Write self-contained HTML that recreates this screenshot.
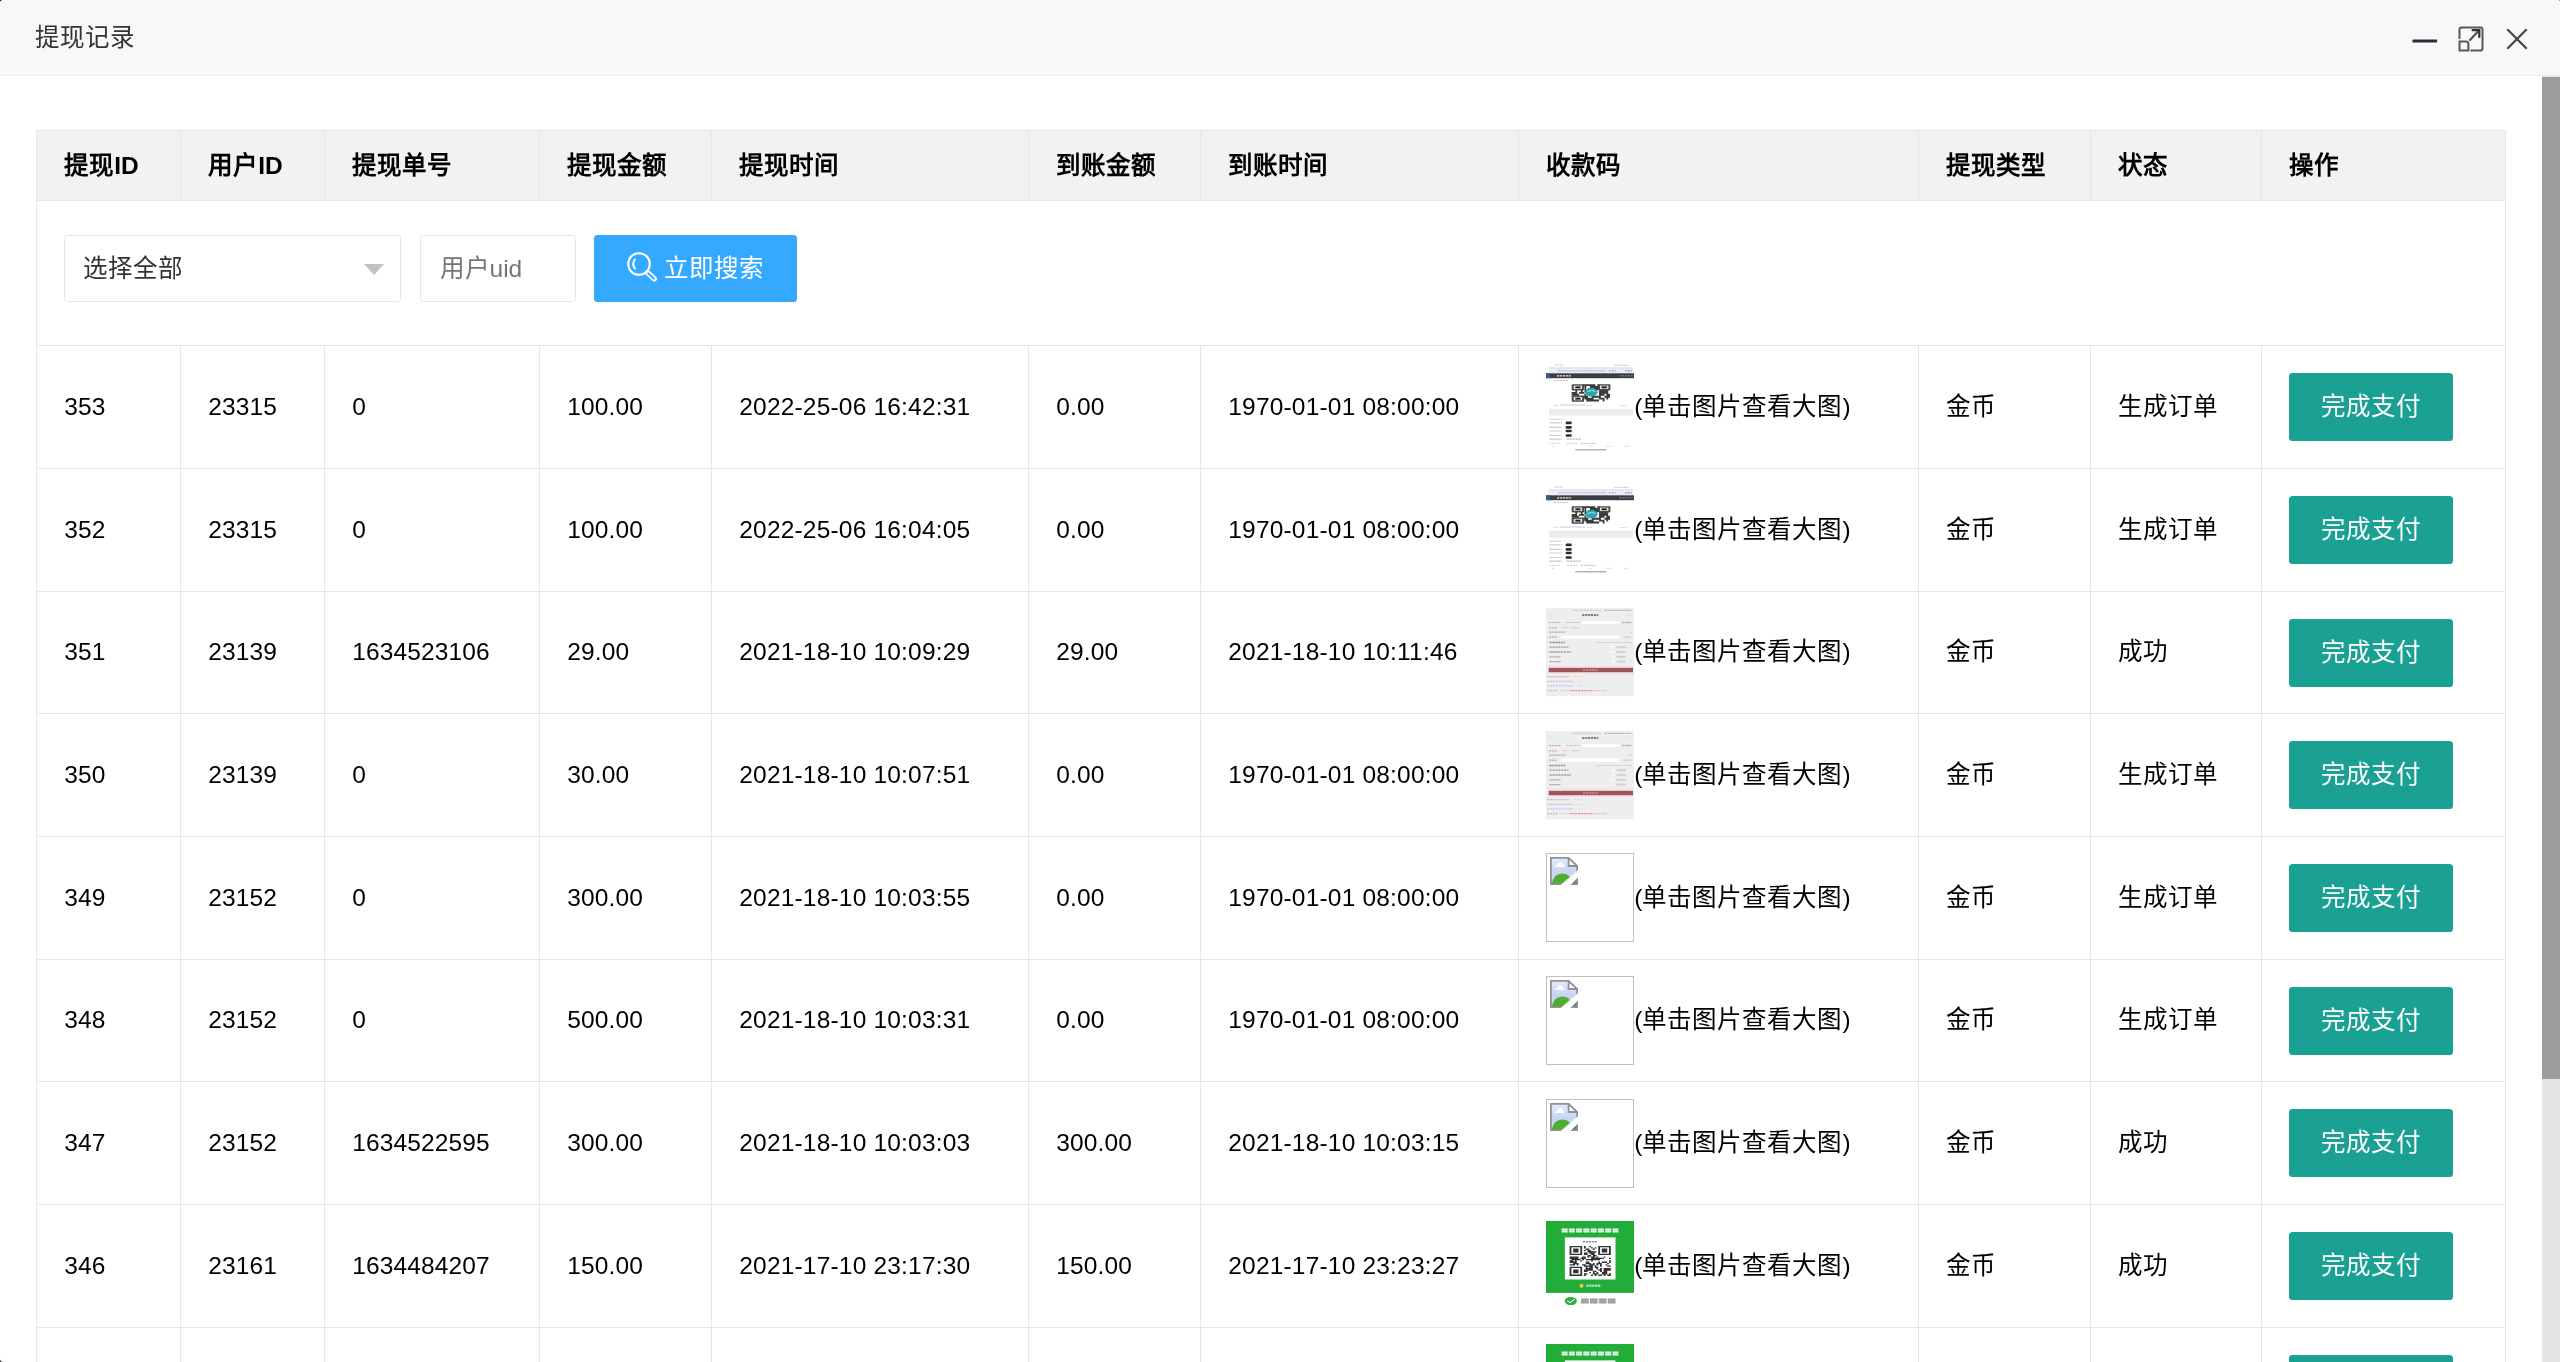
<!DOCTYPE html>
<html lang="zh-CN">
<head>
<meta charset="utf-8">
<title>提现记录</title>
<style>
html,body{margin:0;padding:0}
body{width:2560px;height:1362px;overflow:hidden;background:#2b2b2b;position:relative;font-family:"Liberation Sans",sans-serif;font-size:24.5px;color:#000;line-height:35px}
.bg{position:absolute;left:0;top:0;width:2560px;height:1362px;background:#fff;border-radius:3.5px 2px 0 3.5px}
.page{position:absolute;left:0;top:0;width:2560px;height:1362px;overflow:hidden;will-change:transform;border-radius:3.5px 2px 0 3.5px}
svg{display:block}
.c{letter-spacing:1px}
.nm{letter-spacing:.12px}
.dt{letter-spacing:.19px}
.defs{position:absolute;width:0;height:0;overflow:hidden}
.layer-title{position:absolute;left:0;top:0;width:2560px;height:75px;background:#f8f8f8;border-bottom:1px solid #eee;box-sizing:content-box}
.layer-title .tt{position:absolute;left:35px;top:1px;line-height:73.5px;color:#333;font-size:24.5px;white-space:nowrap}
.ctl svg{position:absolute}
.ic-min{left:2412px;top:39px}
.ic-max{left:2458.3px;top:26.2px}
.ic-close{left:2506.4px;top:28.4px}
.sb-track{position:absolute;left:2542px;top:76px;width:18px;height:1286px;background:#e4e4e4}
.sb-thumb{position:absolute;left:2542px;top:77px;width:18px;height:1002px;background:#9c9c9c}
.tbl{position:absolute;left:36px;top:130px;width:2470px;height:1232px}
.tr{position:absolute;left:0;width:2470px;box-sizing:border-box;border-top:1px solid #e6e6e6}
.tr.thead{background:#f2f2f2}
.tr.search{border-left:1px solid #e6e6e6;border-right:1px solid #e6e6e6}
.tr.search::after{display:none}
.td,.th-c{position:absolute;top:0;bottom:0;box-sizing:border-box;border-left:1px solid #e6e6e6;padding-left:27.25px;display:flex;align-items:center;white-space:nowrap}
.tr::after{content:"";position:absolute;right:0;top:0;bottom:0;width:1px;background:#e6e6e6}
.th-c{font-weight:bold;color:#000}
.th-c>span{position:relative;top:0}
.td{display:block}
.td>span{position:absolute;top:var(--t);line-height:35px}
.sel,.inp{position:absolute;top:34px;height:66.5px;box-sizing:border-box;border:1px solid #e6e6e6;border-radius:3.5px;background:#fff;line-height:66.5px;white-space:nowrap}
.sel{left:27px;width:337px;padding-left:18px;color:#333}
.sel .edge{position:absolute;right:16.5px;top:27.5px;width:0;height:0;border-left:10.5px solid transparent;border-right:10.5px solid transparent;border-top:11px solid #c2c2c2}
.inp{left:383px;width:156px;padding-left:18.5px;color:#757575}
.btn-s{position:absolute;left:557px;top:34px;width:202.6px;height:67px;box-sizing:border-box;background:#35a9ff;border-radius:3.5px;color:#fff;line-height:67px;white-space:nowrap}
.btn-s .ic-search{position:absolute;left:32.4px;top:16.1px}
.btn-s>span{position:absolute;left:70px;top:0}
.td.img{padding-left:27.25px}
.td>.th{position:absolute;left:27.25px;top:var(--i);width:88px;height:88.5px;line-height:0}
.th.broken{box-sizing:border-box;border:1px solid #c0c0c0;background:#fff;display:block}
.th.broken .bi{position:absolute;left:2.5px;top:3px}
.td>span.tip{left:115.25px}
.btn{display:block;width:163.5px;height:67.5px;line-height:67px;text-align:center;background:#1aa194;color:#fff;border-radius:3.5px;position:absolute;top:var(--b);left:27.25px}

</style>
</head>
<body>
<div class="bg"></div>
<div class="page">
<svg class="defs" width="0" height="0" aria-hidden="true"><defs>
<filter id="b1" filterUnits="userSpaceOnUse" x="-6" y="-6" width="100" height="101"><feGaussianBlur stdDeviation="0.6"/></filter>
<filter id="b2" filterUnits="userSpaceOnUse" x="-6" y="-6" width="100" height="101"><feGaussianBlur stdDeviation="0.85"/></filter>
<linearGradient id="sky" x1="0" y1="0" x2="0" y2="1"><stop offset="0" stop-color="#e4ecfb"/><stop offset="0.55" stop-color="#c6d3f3"/><stop offset="1" stop-color="#cfe3f2"/></linearGradient>
<symbol id="icmax" viewBox="0 0 26 26"><path d="M1.5 12.2 V3.6 Q1.5 1.5 3.6 1.5 H22.4 Q24.5 1.5 24.5 3.6 V22.4 Q24.5 24.5 22.4 24.5 H13.2" fill="none" stroke="#55565e" stroke-width="2" stroke-linecap="round"/><path d="M1.5 24.5 V15.6 H8 Q10.4 15.6 10.4 18 V24.5 Z" fill="none" stroke="#55565e" stroke-width="2" stroke-linejoin="round"/><path d="M12 14 L20.2 5.2" fill="none" stroke="#4a4a54" stroke-width="2" stroke-linecap="round"/><path d="M14.6 4.2 H21.3 V11" fill="none" stroke="#2e2d3c" stroke-width="2.2" stroke-linecap="round" stroke-linejoin="miter"/></symbol>
<symbol id="icsearch" viewBox="0 0 32 32"><circle cx="13" cy="13" r="10.8" fill="none" stroke="#fff" stroke-width="2.1"/><path d="M8.9 8.2 Q5.6 13 9 17.6" fill="none" stroke="#fff" stroke-width="2" stroke-linecap="round"/><path d="M21.6 21.6 L28.2 27.9" fill="none" stroke="#fff" stroke-width="5.4" stroke-linecap="round"/><path d="M22.2 22.2 L28 27.7" fill="none" stroke="#35a9ff" stroke-width="1.9" stroke-linecap="round"/></symbol>
<symbol id="brokenimg" viewBox="0 0 28 28"><path d="M0.9 0.9 H18.6 L27.1 9 V27.1 H0.9 Z" fill="url(#sky)"/><path d="M4.4 9.9 Q4.8 8.2 7 8 Q8 5 10.2 5 Q12.6 5 13.2 7.8 Q14.6 8.2 14.4 9.9 Z" fill="#fff" filter="url(#b1)"/><path d="M1.6 27 Q3.6 16.6 12.4 16.6 Q18.6 16.8 20.6 21.5 L26.4 22.2 V27 Z" fill="#50ad33"/><path d="M18.7 27.1 L27.1 19.4 V27.1 Z" fill="#5d8a58"/><path d="M18.6 0.9 V9 H27.1 Z" fill="#fff"/><path d="M0.9 27.1 V0.9 H18.6 L27.1 9 V27.1 Z M18.6 0.9 V9 H27.1" fill="none" stroke="#8e9196" stroke-width="1.8" stroke-linejoin="miter"/><path d="M10.6 29 L19.4 29 L29 19.6 L29 12.8 Z" fill="#fff"/><path d="M11.4 28 L28 13.6" stroke="#e9fbe0" stroke-width="1.2" fill="none"/></symbol>
<symbol id="thumbA" viewBox="0 0 88 88.5"><rect x="0.00" y="0.00" width="88.00" height="88.00" fill="#fff"/><g filter="url(#b1)"><path d="M8.00 2.00H17.50" stroke="#c9c9c9" stroke-width="1.10" stroke-dasharray="2.2 0.7" fill="none"/><path d="M68.50 2.40H83.00" stroke="#cfcfcf" stroke-width="1.10" stroke-dasharray="2.2 0.7" fill="none"/><rect x="3.00" y="4.60" width="84.00" height="0.90" fill="#c8c8c8"/><rect x="2.50" y="5.80" width="85.00" height="4.20" fill="#eaeff6"/><path d="M12.00 7.90H60.00" stroke="#b9bfca" stroke-width="1.10" stroke-dasharray="2.2 0.7" fill="none"/><path d="M63.00 7.90H70.00" stroke="#b0b4bb" stroke-width="1.20" stroke-dasharray="2.2 0.7" fill="none"/><path d="M79.00 7.90H86.00" stroke="#9aa0a8" stroke-width="1.40" stroke-dasharray="2.2 0.7" fill="none"/><rect x="0.00" y="10.30" width="88.00" height="4.90" fill="#3a3e45"/><rect x="0.00" y="10.30" width="4.20" height="4.90" fill="#3d5c78"/><path d="M11.00 12.80H25.00" stroke="#e8e8e8" stroke-width="1.20" stroke-dasharray="2.2 0.7" fill="none"/><path d="M73.00 12.80H87.00" stroke="#7d8188" stroke-width="1.00" stroke-dasharray="2.2 0.7" fill="none"/><path d="M8.00 17.60H22.50" stroke="#d9b9bd" stroke-width="1.00" stroke-dasharray="2.2 0.7" fill="none"/><rect x="3.60" y="16.20" width="0.80" height="2.40" fill="#c7d3e6"/></g><g filter="url(#b1)"><path d="M36.64 21.20h12.77v1.92h-12.77zM51.23 21.20h1.82v1.92h-1.82zM38.47 23.12h1.82v1.92h-1.82zM43.94 23.12h9.12v1.92h-9.12zM38.47 25.04h1.82v1.92h-1.82zM42.11 25.04h3.65v1.92h-3.65zM47.59 25.04h5.47v1.92h-5.47zM29.35 26.97h1.82v1.92h-1.82zM34.82 26.97h1.82v1.92h-1.82zM38.47 26.97h1.82v1.92h-1.82zM47.59 26.97h3.65v1.92h-3.65zM53.06 26.97h9.12v1.92h-9.12zM25.70 28.89h5.47v1.92h-5.47zM33.00 28.89h5.47v1.92h-5.47zM43.94 28.89h5.47v1.92h-5.47zM53.06 28.89h9.12v1.92h-9.12zM25.70 30.81h7.30v1.92h-7.30zM38.47 30.81h1.82v1.92h-1.82zM43.94 30.81h1.82v1.92h-1.82zM53.06 30.81h5.47v1.92h-5.47zM60.35 30.81h3.65v1.92h-3.65zM36.64 32.73h5.47v1.92h-5.47zM45.76 32.73h9.12v1.92h-9.12zM58.53 32.73h5.47v1.92h-5.47zM38.47 34.66h9.12v1.92h-9.12zM53.06 34.66h5.47v1.92h-5.47zM60.35 34.66h1.82v1.92h-1.82zM40.29 36.58h12.77v1.92h-12.77zM56.70 36.58h1.82v1.92h-1.82z" fill="#3a3a3a"/><rect x="25.70" y="21.20" width="12.40" height="6.20" fill="#4a4a4a"  rx="0.8"/><rect x="27.70" y="22.60" width="8.40" height="3.40" fill="#e9e9e9"/><rect x="29.30" y="23.40" width="5.20" height="1.90" fill="#1c1c1c"/><rect x="52.00" y="21.20" width="12.40" height="6.20" fill="#4a4a4a"  rx="0.8"/><rect x="54.00" y="22.60" width="8.40" height="3.40" fill="#e9e9e9"/><rect x="55.60" y="23.40" width="5.20" height="1.90" fill="#1c1c1c"/><rect x="25.70" y="32.50" width="12.40" height="6.20" fill="#4a4a4a"  rx="0.8"/><rect x="27.70" y="33.90" width="8.40" height="3.40" fill="#e9e9e9"/><rect x="29.30" y="34.70" width="5.20" height="1.90" fill="#1c1c1c"/><ellipse cx="45.4" cy="29.3" rx="6.2" ry="4.2" fill="#2ba6b2"/><path d="M41.5 28.6 Q45.5 26.2 49.5 28.4" stroke="#bfe9ee" stroke-width="0.9" fill="none"/></g><g filter="url(#b1)"><path d="M8.00 42.30H12.80" stroke="#d5d5d5" stroke-width="1.00" stroke-dasharray="2.2 0.7" fill="none"/><rect x="14.00" y="41.60" width="25.00" height="0.90" fill="#b9c6ea"/><path d="M41.00 42.60H46.00" stroke="#cfcfcf" stroke-width="1.00" stroke-dasharray="2.2 0.7" fill="none"/><path d="M73.50 42.60H80.50" stroke="#d5d5d5" stroke-width="1.00" stroke-dasharray="2.2 0.7" fill="none"/><rect x="3.00" y="45.80" width="83.80" height="6.90" fill="#ececec"/><path d="M3.50 56.30H16.00" stroke="#c3c3c3" stroke-width="1.10" stroke-dasharray="2.2 0.7" fill="none"/><path d="M3.50 59.90H16.00" stroke="#c3c3c3" stroke-width="1.10" stroke-dasharray="2.2 0.7" fill="none"/><rect x="19.60" y="58.60" width="6.20" height="2.60" fill="#2f2f2f"  rx="1.2"/><path d="M3.50 64.40H16.00" stroke="#c3c3c3" stroke-width="1.10" stroke-dasharray="2.2 0.7" fill="none"/><rect x="19.60" y="63.10" width="6.20" height="2.60" fill="#2f2f2f"  rx="1.2"/><path d="M3.50 68.00H16.00" stroke="#c3c3c3" stroke-width="1.10" stroke-dasharray="2.2 0.7" fill="none"/><rect x="19.60" y="66.70" width="6.20" height="2.60" fill="#2f2f2f"  rx="1.2"/><path d="M3.50 72.50H16.00" stroke="#c3c3c3" stroke-width="1.10" stroke-dasharray="2.2 0.7" fill="none"/><rect x="19.60" y="71.20" width="6.20" height="2.60" fill="#2f2f2f"  rx="1.2"/><rect x="17.80" y="55.60" width="1.20" height="1.20" fill="#f0d9c8"/><rect x="24.60" y="55.60" width="1.20" height="1.20" fill="#f0d9c8"/><path d="M3.50 76.10H16.00" stroke="#bdbdbd" stroke-width="1.10" stroke-dasharray="2.2 0.7" fill="none"/><path d="M20.80 76.10H34.60" stroke="#a9bed3" stroke-width="1.10" stroke-dasharray="2.2 0.7" fill="none"/><path d="M3.00 80.40H14.40" stroke="#d9d9d9" stroke-width="1.00" stroke-dasharray="2.2 0.7" fill="none"/><path d="M20.80 80.40H31.30" stroke="#c6d3ea" stroke-width="1.00" stroke-dasharray="2.2 0.7" fill="none"/><path d="M34.50 80.40H50.00" stroke="#a9cfd0" stroke-width="1.00" stroke-dasharray="2.2 0.7" fill="none"/><path d="M6.00 83.30H9.00" stroke="#dcdcdc" stroke-width="1.00" stroke-dasharray="2.2 0.7" fill="none"/><path d="M43.50 83.30H46.70" stroke="#d2d2d2" stroke-width="1.00" stroke-dasharray="2.2 0.7" fill="none"/><path d="M59.60 83.30H66.00" stroke="#d8d8d8" stroke-width="1.00" stroke-dasharray="2.2 0.7" fill="none"/><path d="M78.20 83.30H83.80" stroke="#d8d8d8" stroke-width="1.00" stroke-dasharray="2.2 0.7" fill="none"/><rect x="29.00" y="85.90" width="31.40" height="1.50" fill="#b3b3b3"  rx="0.7"/></g></symbol>
<symbol id="thumbB" viewBox="0 0 88 88.5"><rect x="0.00" y="0.00" width="88.00" height="88.50" fill="#eeeeee"/><g filter="url(#b1)"><path d="M26.50 2.40H54.80" stroke="#cdcdcd" stroke-width="1.10" stroke-dasharray="2.2 0.7" fill="none"/><path d="M58.80 2.40H85.50" stroke="#b7b7b7" stroke-width="1.20" stroke-dasharray="2.2 0.7" fill="none"/><path d="M36.20 6.90H52.30" stroke="#5c5c5c" stroke-width="1.50" stroke-dasharray="2.2 0.7" fill="none"/><path d="M2.30 6.90H6.30" stroke="#d6d6d6" stroke-width="1.00" stroke-dasharray="2.2 0.7" fill="none"/><path d="M80.60 6.90H85.50" stroke="#dadada" stroke-width="1.00" stroke-dasharray="2.2 0.7" fill="none"/><rect x="35.40" y="13.20" width="37.90" height="2.70" fill="#ffffff"/><path d="M3.00 14.50H15.20" stroke="#b4b4b4" stroke-width="1.20" stroke-dasharray="2.2 0.7" fill="none"/><path d="M20.00 14.50H34.60" stroke="#c4c4c4" stroke-width="1.10" stroke-dasharray="2.2 0.7" fill="none"/><path d="M76.20 14.50H85.50" stroke="#9fc29a" stroke-width="1.30" stroke-dasharray="2.2 0.7" fill="none"/><path d="M3.00 19.80H11.10" stroke="#e9a3ae" stroke-width="1.20" stroke-dasharray="2.2 0.7" fill="none"/><path d="M16.00 19.80H22.50" stroke="#efb9c1" stroke-width="1.10" stroke-dasharray="2.2 0.7" fill="none"/><path d="M25.70 19.80H33.00" stroke="#c2c2c2" stroke-width="1.10" stroke-dasharray="2.2 0.7" fill="none"/><path d="M3.50 24.20H19.20" stroke="#a9a9a9" stroke-width="1.30" stroke-dasharray="2.2 0.7" fill="none"/><path d="M83.40 24.20H85.90" stroke="#c2c2c2" stroke-width="1.10" stroke-dasharray="2.2 0.7" fill="none"/><rect x="15.20" y="27.40" width="58.10" height="3.30" fill="#ffffff"/><path d="M3.00 29.10H11.00" stroke="#b4b4b4" stroke-width="1.20" stroke-dasharray="2.2 0.7" fill="none"/><path d="M77.40 29.10H84.70" stroke="#c3c3c3" stroke-width="1.10" stroke-dasharray="2.2 0.7" fill="none"/><path d="M3.50 34.50H19.20" stroke="#8f8f8f" stroke-width="1.40" stroke-dasharray="2.2 0.7" fill="none"/><path d="M49.00 34.50H86.30" stroke="#cfcfcf" stroke-width="1.00" stroke-dasharray="2.2 0.7" fill="none"/><path d="M3.50 39.20H22.50" stroke="#9d9d9d" stroke-width="1.30" stroke-dasharray="2.2 0.7" fill="none"/><rect x="70.50" y="38.20" width="9.30" height="2.00" fill="#d2d2d2"/><rect x="65.30" y="38.20" width="3.20" height="2.00" fill="#fafafa"/><path d="M3.50 44.00H25.00" stroke="#9d9d9d" stroke-width="1.30" stroke-dasharray="2.2 0.7" fill="none"/><rect x="70.50" y="43.00" width="9.30" height="2.00" fill="#d2d2d2"/><rect x="65.30" y="43.00" width="3.20" height="2.00" fill="#fafafa"/><path d="M3.50 48.90H15.20" stroke="#b0a3a3" stroke-width="1.30" stroke-dasharray="2.2 0.7" fill="none"/><rect x="70.50" y="47.90" width="9.30" height="2.00" fill="#d2d2d2"/><rect x="65.30" y="47.90" width="3.20" height="2.00" fill="#fafafa"/><path d="M3.50 53.60H14.40" stroke="#b0a3a3" stroke-width="1.30" stroke-dasharray="2.2 0.7" fill="none"/><rect x="70.50" y="52.60" width="9.30" height="2.00" fill="#d2d2d2"/><rect x="65.30" y="52.60" width="3.20" height="2.00" fill="#fafafa"/><rect x="0.00" y="57.80" width="88.00" height="0.90" fill="#f6dcdc"/><rect x="2.70" y="59.80" width="84.30" height="4.50" fill="#a3525a"/><path d="M37.00 62.00H52.30" stroke="#d9b3b7" stroke-width="1.10" stroke-dasharray="2.2 0.7" fill="none"/><rect x="0.00" y="64.80" width="88.00" height="0.80" fill="#f4dede"/><path d="M1.00 68.70H22.50" stroke="#eab1ba" stroke-width="1.20" stroke-dasharray="2.2 0.7" fill="none"/><path d="M28.00 68.70H37.00" stroke="#f1cdd2" stroke-width="1.00" stroke-dasharray="2.2 0.7" fill="none"/><path d="M1.00 73.30H27.30" stroke="#c1c6f0" stroke-width="1.30" stroke-dasharray="2.2 0.7" fill="none"/><path d="M32.00 73.30H38.60" stroke="#d6d9f3" stroke-width="1.00" stroke-dasharray="2.2 0.7" fill="none"/><path d="M1.00 77.80H27.30" stroke="#c4c9f0" stroke-width="1.30" stroke-dasharray="2.2 0.7" fill="none"/><path d="M32.00 77.80H37.00" stroke="#dcdcf2" stroke-width="1.00" stroke-dasharray="2.2 0.7" fill="none"/><path d="M1.00 82.60H12.00" stroke="#ebb4bc" stroke-width="1.20" stroke-dasharray="2.2 0.7" fill="none"/><path d="M14.00 82.60H22.00" stroke="#d3d3d3" stroke-width="1.00" stroke-dasharray="2.2 0.7" fill="none"/><path d="M23.30 82.60H45.90" stroke="#ea8fa0" stroke-width="1.30" stroke-dasharray="2.2 0.7" fill="none"/><path d="M46.70 82.60H61.20" stroke="#c9c9c9" stroke-width="1.10" stroke-dasharray="2.2 0.7" fill="none"/></g></symbol>
<symbol id="thumbC" viewBox="0 0 88 88.5"><rect x="0.00" y="0.00" width="88.00" height="71.90" fill="#22ac38"/><g filter="url(#b1)"><path d="M15.6 9.5H73" stroke="#e9f7ec" stroke-width="4" stroke-dasharray="6.1 1.15" fill="none"/><path d="M15.6 9.5H73" stroke="#22ac38" stroke-width="1" stroke-dasharray="1.2 1.3" fill="none" opacity="0.55"/></g><rect x="18.90" y="16.40" width="50.60" height="42.10" fill="#ffffff"/><g filter="url(#b1)"><path d="M36.90 20.80H51.00" stroke="#8d8d8d" stroke-width="1.40" stroke-dasharray="2.2 0.7" fill="none"/><path d="M23.60 25.00h12.54v1.30h-12.54zM37.93 25.00h1.79v1.30h-1.79zM43.30 25.00h1.79v1.30h-1.79zM52.26 25.00h12.54v1.30h-12.54zM23.60 26.30h1.79v1.30h-1.79zM34.35 26.30h1.79v1.30h-1.79zM37.93 26.30h1.79v1.30h-1.79zM45.10 26.30h1.79v1.30h-1.79zM48.68 26.30h1.79v1.30h-1.79zM52.26 26.30h1.79v1.30h-1.79zM63.01 26.30h1.79v1.30h-1.79zM23.60 27.60h1.79v1.30h-1.79zM27.18 27.60h5.37v1.30h-5.37zM34.35 27.60h1.79v1.30h-1.79zM39.72 27.60h3.58v1.30h-3.58zM46.89 27.60h1.79v1.30h-1.79zM52.26 27.60h1.79v1.30h-1.79zM55.84 27.60h5.37v1.30h-5.37zM63.01 27.60h1.79v1.30h-1.79zM23.60 28.90h1.79v1.30h-1.79zM27.18 28.90h5.37v1.30h-5.37zM34.35 28.90h1.79v1.30h-1.79zM37.93 28.90h1.79v1.30h-1.79zM41.51 28.90h3.58v1.30h-3.58zM52.26 28.90h1.79v1.30h-1.79zM55.84 28.90h5.37v1.30h-5.37zM63.01 28.90h1.79v1.30h-1.79zM23.60 30.20h1.79v1.30h-1.79zM27.18 30.20h5.37v1.30h-5.37zM34.35 30.20h1.79v1.30h-1.79zM41.51 30.20h8.96v1.30h-8.96zM52.26 30.20h1.79v1.30h-1.79zM55.84 30.20h5.37v1.30h-5.37zM63.01 30.20h1.79v1.30h-1.79zM23.60 31.50h1.79v1.30h-1.79zM34.35 31.50h1.79v1.30h-1.79zM37.93 31.50h3.58v1.30h-3.58zM43.30 31.50h5.37v1.30h-5.37zM52.26 31.50h1.79v1.30h-1.79zM63.01 31.50h1.79v1.30h-1.79zM23.60 32.80h12.54v1.30h-12.54zM37.93 32.80h3.58v1.30h-3.58zM45.10 32.80h3.58v1.30h-3.58zM52.26 32.80h12.54v1.30h-12.54zM41.51 34.10h3.58v1.30h-3.58zM46.89 34.10h3.58v1.30h-3.58zM23.60 35.40h8.96v1.30h-8.96zM36.14 35.40h3.58v1.30h-3.58zM41.51 35.40h1.79v1.30h-1.79zM45.10 35.40h3.58v1.30h-3.58zM50.47 35.40h1.79v1.30h-1.79zM57.63 35.40h1.79v1.30h-1.79zM23.60 36.70h8.96v1.30h-8.96zM34.35 36.70h5.37v1.30h-5.37zM45.10 36.70h12.54v1.30h-12.54zM63.01 36.70h1.79v1.30h-1.79zM25.39 38.00h8.96v1.30h-8.96zM36.14 38.00h1.79v1.30h-1.79zM39.72 38.00h14.33v1.30h-14.33zM23.60 39.30h3.58v1.30h-3.58zM28.97 39.30h1.79v1.30h-1.79zM34.35 39.30h1.79v1.30h-1.79zM45.10 39.30h1.79v1.30h-1.79zM63.01 39.30h1.79v1.30h-1.79zM23.60 40.60h7.17v1.30h-7.17zM39.72 40.60h3.58v1.30h-3.58zM52.26 40.60h1.79v1.30h-1.79zM55.84 40.60h5.37v1.30h-5.37zM63.01 40.60h1.79v1.30h-1.79zM27.18 41.90h5.37v1.30h-5.37zM39.72 41.90h5.37v1.30h-5.37zM46.89 41.90h1.79v1.30h-1.79zM50.47 41.90h5.37v1.30h-5.37zM61.22 41.90h1.79v1.30h-1.79zM23.60 43.20h5.37v1.30h-5.37zM30.77 43.20h1.79v1.30h-1.79zM36.14 43.20h3.58v1.30h-3.58zM43.30 43.20h5.37v1.30h-5.37zM50.47 43.20h1.79v1.30h-1.79zM54.05 43.20h1.79v1.30h-1.79zM59.43 43.20h1.79v1.30h-1.79zM37.93 44.50h8.96v1.30h-8.96zM48.68 44.50h1.79v1.30h-1.79zM54.05 44.50h1.79v1.30h-1.79zM61.22 44.50h3.58v1.30h-3.58zM23.60 45.80h12.54v1.30h-12.54zM39.72 45.80h1.79v1.30h-1.79zM43.30 45.80h3.58v1.30h-3.58zM48.68 45.80h3.58v1.30h-3.58zM23.60 47.10h1.79v1.30h-1.79zM34.35 47.10h1.79v1.30h-1.79zM39.72 47.10h7.17v1.30h-7.17zM50.47 47.10h1.79v1.30h-1.79zM54.05 47.10h1.79v1.30h-1.79zM57.63 47.10h7.17v1.30h-7.17zM23.60 48.40h1.79v1.30h-1.79zM27.18 48.40h5.37v1.30h-5.37zM34.35 48.40h1.79v1.30h-1.79zM37.93 48.40h8.96v1.30h-8.96zM52.26 48.40h3.58v1.30h-3.58zM57.63 48.40h7.17v1.30h-7.17zM23.60 49.70h1.79v1.30h-1.79zM27.18 49.70h5.37v1.30h-5.37zM34.35 49.70h1.79v1.30h-1.79zM37.93 49.70h3.58v1.30h-3.58zM46.89 49.70h3.58v1.30h-3.58zM54.05 49.70h1.79v1.30h-1.79zM57.63 49.70h3.58v1.30h-3.58zM23.60 51.00h1.79v1.30h-1.79zM27.18 51.00h5.37v1.30h-5.37zM34.35 51.00h1.79v1.30h-1.79zM43.30 51.00h1.79v1.30h-1.79zM46.89 51.00h1.79v1.30h-1.79zM50.47 51.00h1.79v1.30h-1.79zM55.84 51.00h5.37v1.30h-5.37zM23.60 52.30h1.79v1.30h-1.79zM34.35 52.30h1.79v1.30h-1.79zM37.93 52.30h3.58v1.30h-3.58zM46.89 52.30h5.37v1.30h-5.37zM55.84 52.30h5.37v1.30h-5.37zM63.01 52.30h1.79v1.30h-1.79zM23.60 53.60h12.54v1.30h-12.54zM37.93 53.60h1.79v1.30h-1.79zM45.10 53.60h1.79v1.30h-1.79zM48.68 53.60h1.79v1.30h-1.79zM52.26 53.60h3.58v1.30h-3.58zM57.63 53.60h1.79v1.30h-1.79zM61.22 53.60h3.58v1.30h-3.58z" fill="#303030"/></g><g filter="url(#b1)"><circle cx="35.5" cy="64.8" r="2.1" fill="#e7c63e"/><path d="M40.50 64.80H55.10" stroke="#a9e2b2" stroke-width="2.40" stroke-dasharray="2.2 0.7" fill="none"/><ellipse cx="24.8" cy="80.1" rx="6.1" ry="4" fill="#2aae3d"/><path d="M21.4 79.8 L24 81.6 L28.4 78.4" stroke="#fff" stroke-width="1.1" fill="none"/><path d="M35 80H69.6" stroke="#9a9a9a" stroke-width="5" stroke-dasharray="7.8 1.1" fill="none"/><path d="M35 80H69.6" stroke="#fff" stroke-width="1.1" stroke-dasharray="1.1 1.5" fill="none" opacity="0.6"/></g></symbol>
</defs></svg>
<div class="layer-title"><span class="tt"><span class="c">提现记录</span></span><div class="ctl"><svg class="ic-min" width="26" height="4" viewBox="0 0 26 4"><rect x="0.5" y="0.4" width="24.6" height="3.2" rx="0.5" fill="#2e2d3c"/></svg><svg class="ic-max" width="26" height="26" viewBox="0 0 26 26"><use href="#icmax"/></svg><svg class="ic-close" width="22" height="22" viewBox="0 0 22 22"><path d="M1.3 1.3 L20.7 20.7 M20.7 1.3 L1.3 20.7" stroke="#45454e" stroke-width="2.2" fill="none"/></svg></div></div>
<div class="sb-track"></div><div class="sb-thumb"></div>
<div class="tbl">
<div class="tr thead" style="top:0px;height:70px"><div class="th-c" style="left:0px;width:144px"><span><span class="c">提现</span>ID</span></div><div class="th-c" style="left:144px;width:144px"><span><span class="c">用户</span>ID</span></div><div class="th-c" style="left:288px;width:215px"><span><span class="c">提现单号</span></span></div><div class="th-c" style="left:503px;width:172px"><span><span class="c">提现金额</span></span></div><div class="th-c" style="left:675px;width:317px"><span><span class="c">提现时间</span></span></div><div class="th-c" style="left:992px;width:172px"><span><span class="c">到账金额</span></span></div><div class="th-c" style="left:1164px;width:318px"><span><span class="c">到账时间</span></span></div><div class="th-c" style="left:1482px;width:400px"><span><span class="c">收款码</span></span></div><div class="th-c" style="left:1882px;width:172px"><span><span class="c">提现类型</span></span></div><div class="th-c" style="left:2054px;width:171px"><span><span class="c">状态</span></span></div><div class="th-c" style="left:2225px;width:244px"><span><span class="c">操作</span></span></div></div>
<div class="tr search" style="top:70px;height:145px"><div class="sel"><span><span class="c">选择全部</span></span><i class="edge"></i></div><div class="inp"><span><span class="c">用户</span>uid</span></div><div class="btn-s"><svg class="ic-search" width="32" height="32" viewBox="0 0 32 32"><use href="#icsearch"/></svg><span><span class="c">立即搜索</span></span></div></div>
<div class="tr" style="top:215px;height:123px;--t:43px;--i:17px;--b:27px"><div class="td nm" style="left:0px;width:144px"><span>353</span></div><div class="td nm" style="left:144px;width:144px"><span>23315</span></div><div class="td nm" style="left:288px;width:215px"><span>0</span></div><div class="td nm" style="left:503px;width:172px"><span>100.00</span></div><div class="td dt" style="left:675px;width:317px"><span>2022-25-06 16:42:31</span></div><div class="td nm" style="left:992px;width:172px"><span>0.00</span></div><div class="td dt" style="left:1164px;width:318px"><span>1970-01-01 08:00:00</span></div><div class="td img" style="left:1482px;width:400px"><svg class="th" width="88" height="88.5" viewBox="0 0 88 88.5" preserveAspectRatio="none"><use href="#thumbA"/></svg><span class="tip">(<span class="c">单击图片查看大图</span>)</span></div><div class="td" style="left:1882px;width:172px"><span><span class="c">金币</span></span></div><div class="td" style="left:2054px;width:171px"><span><span class="c">生成订单</span></span></div><div class="td op" style="left:2225px;width:244px"><a class="btn"><span class="c">完成支付</span></a></div></div>
<div class="tr" style="top:338px;height:123px;--t:43px;--i:16px;--b:27px"><div class="td nm" style="left:0px;width:144px"><span>352</span></div><div class="td nm" style="left:144px;width:144px"><span>23315</span></div><div class="td nm" style="left:288px;width:215px"><span>0</span></div><div class="td nm" style="left:503px;width:172px"><span>100.00</span></div><div class="td dt" style="left:675px;width:317px"><span>2022-25-06 16:04:05</span></div><div class="td nm" style="left:992px;width:172px"><span>0.00</span></div><div class="td dt" style="left:1164px;width:318px"><span>1970-01-01 08:00:00</span></div><div class="td img" style="left:1482px;width:400px"><svg class="th" width="88" height="88.5" viewBox="0 0 88 88.5" preserveAspectRatio="none"><use href="#thumbA"/></svg><span class="tip">(<span class="c">单击图片查看大图</span>)</span></div><div class="td" style="left:1882px;width:172px"><span><span class="c">金币</span></span></div><div class="td" style="left:2054px;width:171px"><span><span class="c">生成订单</span></span></div><div class="td op" style="left:2225px;width:244px"><a class="btn"><span class="c">完成支付</span></a></div></div>
<div class="tr" style="top:461px;height:122px;--t:42px;--i:16px;--b:27px"><div class="td nm" style="left:0px;width:144px"><span>351</span></div><div class="td nm" style="left:144px;width:144px"><span>23139</span></div><div class="td nm" style="left:288px;width:215px"><span>1634523106</span></div><div class="td nm" style="left:503px;width:172px"><span>29.00</span></div><div class="td dt" style="left:675px;width:317px"><span>2021-18-10 10:09:29</span></div><div class="td nm" style="left:992px;width:172px"><span>29.00</span></div><div class="td dt" style="left:1164px;width:318px"><span>2021-18-10 10:11:46</span></div><div class="td img" style="left:1482px;width:400px"><svg class="th" width="88" height="88.5" viewBox="0 0 88 88.5" preserveAspectRatio="none"><use href="#thumbB"/></svg><span class="tip">(<span class="c">单击图片查看大图</span>)</span></div><div class="td" style="left:1882px;width:172px"><span><span class="c">金币</span></span></div><div class="td" style="left:2054px;width:171px"><span><span class="c">成功</span></span></div><div class="td op" style="left:2225px;width:244px"><a class="btn"><span class="c">完成支付</span></a></div></div>
<div class="tr" style="top:583px;height:123px;--t:43px;--i:17px;--b:27px"><div class="td nm" style="left:0px;width:144px"><span>350</span></div><div class="td nm" style="left:144px;width:144px"><span>23139</span></div><div class="td nm" style="left:288px;width:215px"><span>0</span></div><div class="td nm" style="left:503px;width:172px"><span>30.00</span></div><div class="td dt" style="left:675px;width:317px"><span>2021-18-10 10:07:51</span></div><div class="td nm" style="left:992px;width:172px"><span>0.00</span></div><div class="td dt" style="left:1164px;width:318px"><span>1970-01-01 08:00:00</span></div><div class="td img" style="left:1482px;width:400px"><svg class="th" width="88" height="88.5" viewBox="0 0 88 88.5" preserveAspectRatio="none"><use href="#thumbB"/></svg><span class="tip">(<span class="c">单击图片查看大图</span>)</span></div><div class="td" style="left:1882px;width:172px"><span><span class="c">金币</span></span></div><div class="td" style="left:2054px;width:171px"><span><span class="c">生成订单</span></span></div><div class="td op" style="left:2225px;width:244px"><a class="btn"><span class="c">完成支付</span></a></div></div>
<div class="tr" style="top:706px;height:123px;--t:43px;--i:16px;--b:27px"><div class="td nm" style="left:0px;width:144px"><span>349</span></div><div class="td nm" style="left:144px;width:144px"><span>23152</span></div><div class="td nm" style="left:288px;width:215px"><span>0</span></div><div class="td nm" style="left:503px;width:172px"><span>300.00</span></div><div class="td dt" style="left:675px;width:317px"><span>2021-18-10 10:03:55</span></div><div class="td nm" style="left:992px;width:172px"><span>0.00</span></div><div class="td dt" style="left:1164px;width:318px"><span>1970-01-01 08:00:00</span></div><div class="td img" style="left:1482px;width:400px"><span class="th broken"><svg class="bi" width="28" height="28" viewBox="0 0 28 28"><use href="#brokenimg"/></svg></span><span class="tip">(<span class="c">单击图片查看大图</span>)</span></div><div class="td" style="left:1882px;width:172px"><span><span class="c">金币</span></span></div><div class="td" style="left:2054px;width:171px"><span><span class="c">生成订单</span></span></div><div class="td op" style="left:2225px;width:244px"><a class="btn"><span class="c">完成支付</span></a></div></div>
<div class="tr" style="top:829px;height:122px;--t:42px;--i:16px;--b:27px"><div class="td nm" style="left:0px;width:144px"><span>348</span></div><div class="td nm" style="left:144px;width:144px"><span>23152</span></div><div class="td nm" style="left:288px;width:215px"><span>0</span></div><div class="td nm" style="left:503px;width:172px"><span>500.00</span></div><div class="td dt" style="left:675px;width:317px"><span>2021-18-10 10:03:31</span></div><div class="td nm" style="left:992px;width:172px"><span>0.00</span></div><div class="td dt" style="left:1164px;width:318px"><span>1970-01-01 08:00:00</span></div><div class="td img" style="left:1482px;width:400px"><span class="th broken"><svg class="bi" width="28" height="28" viewBox="0 0 28 28"><use href="#brokenimg"/></svg></span><span class="tip">(<span class="c">单击图片查看大图</span>)</span></div><div class="td" style="left:1882px;width:172px"><span><span class="c">金币</span></span></div><div class="td" style="left:2054px;width:171px"><span><span class="c">生成订单</span></span></div><div class="td op" style="left:2225px;width:244px"><a class="btn"><span class="c">完成支付</span></a></div></div>
<div class="tr" style="top:951px;height:123px;--t:43px;--i:17px;--b:27px"><div class="td nm" style="left:0px;width:144px"><span>347</span></div><div class="td nm" style="left:144px;width:144px"><span>23152</span></div><div class="td nm" style="left:288px;width:215px"><span>1634522595</span></div><div class="td nm" style="left:503px;width:172px"><span>300.00</span></div><div class="td dt" style="left:675px;width:317px"><span>2021-18-10 10:03:03</span></div><div class="td nm" style="left:992px;width:172px"><span>300.00</span></div><div class="td dt" style="left:1164px;width:318px"><span>2021-18-10 10:03:15</span></div><div class="td img" style="left:1482px;width:400px"><span class="th broken"><svg class="bi" width="28" height="28" viewBox="0 0 28 28"><use href="#brokenimg"/></svg></span><span class="tip">(<span class="c">单击图片查看大图</span>)</span></div><div class="td" style="left:1882px;width:172px"><span><span class="c">金币</span></span></div><div class="td" style="left:2054px;width:171px"><span><span class="c">成功</span></span></div><div class="td op" style="left:2225px;width:244px"><a class="btn"><span class="c">完成支付</span></a></div></div>
<div class="tr" style="top:1074px;height:123px;--t:43px;--i:16px;--b:27px"><div class="td nm" style="left:0px;width:144px"><span>346</span></div><div class="td nm" style="left:144px;width:144px"><span>23161</span></div><div class="td nm" style="left:288px;width:215px"><span>1634484207</span></div><div class="td nm" style="left:503px;width:172px"><span>150.00</span></div><div class="td dt" style="left:675px;width:317px"><span>2021-17-10 23:17:30</span></div><div class="td nm" style="left:992px;width:172px"><span>150.00</span></div><div class="td dt" style="left:1164px;width:318px"><span>2021-17-10 23:23:27</span></div><div class="td img" style="left:1482px;width:400px"><svg class="th" width="88" height="88.5" viewBox="0 0 88 88.5" preserveAspectRatio="none"><use href="#thumbC"/></svg><span class="tip">(<span class="c">单击图片查看大图</span>)</span></div><div class="td" style="left:1882px;width:172px"><span><span class="c">金币</span></span></div><div class="td" style="left:2054px;width:171px"><span><span class="c">成功</span></span></div><div class="td op" style="left:2225px;width:244px"><a class="btn"><span class="c">完成支付</span></a></div></div>
<div class="tr" style="top:1197px;height:123px;--t:42px;--i:16px;--b:27px"><div class="td nm" style="left:0px;width:144px"><span>345</span></div><div class="td nm" style="left:144px;width:144px"><span>23161</span></div><div class="td nm" style="left:288px;width:215px"><span>1634484100</span></div><div class="td nm" style="left:503px;width:172px"><span>100.00</span></div><div class="td dt" style="left:675px;width:317px"><span>2021-17-10 23:15:12</span></div><div class="td nm" style="left:992px;width:172px"><span>100.00</span></div><div class="td dt" style="left:1164px;width:318px"><span>2021-17-10 23:16:40</span></div><div class="td img" style="left:1482px;width:400px"><svg class="th" width="88" height="88.5" viewBox="0 0 88 88.5" preserveAspectRatio="none"><use href="#thumbC"/></svg><span class="tip">(<span class="c">单击图片查看大图</span>)</span></div><div class="td" style="left:1882px;width:172px"><span><span class="c">金币</span></span></div><div class="td" style="left:2054px;width:171px"><span><span class="c">成功</span></span></div><div class="td op" style="left:2225px;width:244px"><a class="btn"><span class="c">完成支付</span></a></div></div>
</div>
</div>
</body>
</html>
